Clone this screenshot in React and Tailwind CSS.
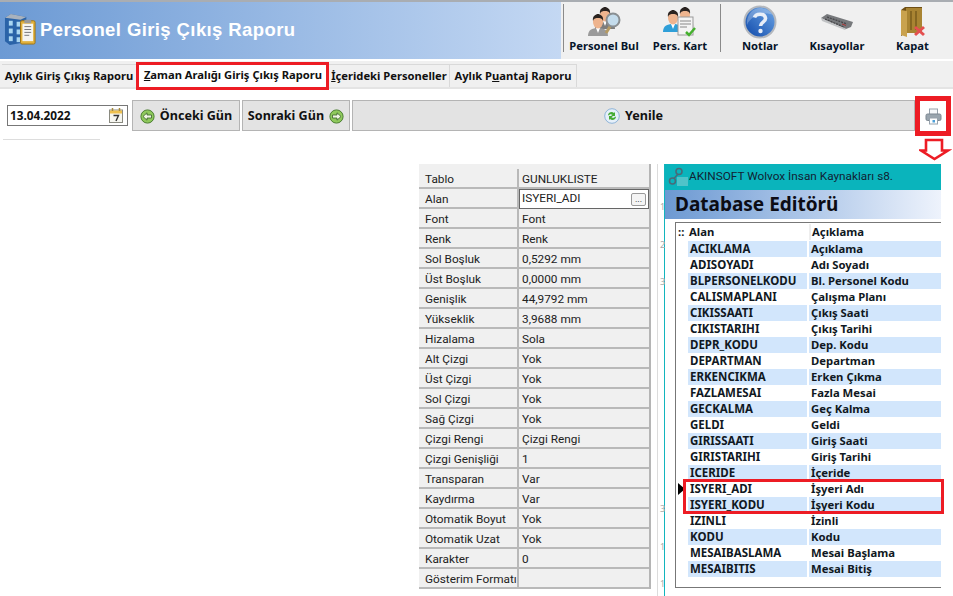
import React from "react";

const props = [
  ["Tablo", "GUNLUKLISTE"], ["Alan", "ISYERI_ADI"], ["Font", "Font"], ["Renk", "Renk"],
  ["Sol Boşluk", "0,5292 mm"], ["Üst Boşluk", "0,0000 mm"], ["Genişlik", "44,9792 mm"], ["Yükseklik", "3,9688 mm"],
  ["Hizalama", "Sola"], ["Alt Çizgi", "Yok"], ["Üst Çizgi", "Yok"], ["Sol Çizgi", "Yok"], ["Sağ Çizgi", "Yok"],
  ["Çizgi Rengi", "Çizgi Rengi"], ["Çizgi Genişliği", "1"], ["Transparan", "Var"], ["Kaydırma", "Var"],
  ["Otomatik Boyut", "Yok"], ["Otomatik Uzat", "Yok"], ["Karakter", "0"], ["Gösterim Formatı", ""],
];
const fields = [
  ["ACIKLAMA", "Açıklama"], ["ADISOYADI", "Adı Soyadı"], ["BLPERSONELKODU", "Bl. Personel Kodu"],
  ["CALISMAPLANI", "Çalışma Planı"], ["CIKISSAATI", "Çıkış Saati"], ["CIKISTARIHI", "Çıkış Tarihi"],
  ["DEPR_KODU", "Dep. Kodu"], ["DEPARTMAN", "Departman"], ["ERKENCIKMA", "Erken Çıkma"], ["FAZLAMESAI", "Fazla Mesai"],
  ["GECKALMA", "Geç Kalma"], ["GELDI", "Geldi"], ["GIRISSAATI", "Giriş Saati"], ["GIRISTARIHI", "Giriş Tarihi"],
  ["ICERIDE", "İçeride"], ["ISYERI_ADI", "İşyeri Adı"], ["ISYERI_KODU", "İşyeri Kodu"], ["IZINLI", "İzinli"],
  ["KODU", "Kodu"], ["MESAIBASLAMA", "Mesai Başlama"], ["MESAIBITIS", "Mesai Bitiş"],
];

const Person = ({ x = 0, y = 0, suit = "#8b8b8b" }) => (
  <g transform={`translate(${x} ${y})`}>
    <path d="M0 22c0-6 4-8 10-8s10 2 10 8z" fill={suit} />
    <path d="M8 14l2 5 2-5z" fill="#fff" />
    <ellipse cx="10" cy="8" rx="5" ry="6.5" fill="#eeb48e" />
    <path d="M5 7c-1-5 3-7 5-7s6 2 5 7c-1-3-3-3-5-3s-4 0-5 3z" fill="#2a2320" />
  </g>
);

const IconFind = () => (
  <svg width="34" height="32" viewBox="0 0 34 32">
    <Person x={8} y={1} suit="#7d7d7d" />
    <Person x={1} y={8} suit="#9a9a9a" />
    <path d="M19 27l5-8" stroke="#b59a63" strokeWidth="3" />
    <circle cx="26" cy="14" r="6.5" fill="#c4dcec" stroke="#8a8f92" strokeWidth="2" />
  </svg>
);
const IconCard = () => (
  <svg width="34" height="32" viewBox="0 0 34 32">
    <Person x={12} y={1} suit="#e4e4e4" />
    <Person x={0} y={4} suit="#2f9fd8" />
    <rect x="15" y="11" width="15" height="18" fill="#f4f4f4" stroke="#9a9a9a" />
    <path d="M17 15h11M17 18h11M17 21h7" stroke="#888" />
    <path d="M23 26l3 3 6-7" fill="none" stroke="#45b02e" strokeWidth="2.5" />
  </svg>
);
const IconHelp = () => (
  <svg width="34" height="34" viewBox="0 0 34 34">
    <defs>
      <linearGradient id="hg" x1="0" y1="1" x2="1" y2="0">
        <stop offset="0" stopColor="#0d47a8" /><stop offset="1" stopColor="#6fa8e8" />
      </linearGradient>
    </defs>
    <circle cx="17" cy="17" r="15.5" fill="url(#hg)" stroke="#b4b8be" strokeWidth="2" />
    <path d="M4 20C8 10 22 6 30 10 26 4 20 3 17 3 9 3 3 11 4 20z" fill="#fff" opacity=".25" />
    <path d="M11.500 12.500c1-4 10-5 11 .5 .6 4-5 4-5 8" fill="none" stroke="#e8eef8" strokeWidth="3.6" />
    <circle cx="17.500" cy="26" r="2.200" fill="#e8eef8" />
  </svg>
);
const IconKeyboard = () => (
  <svg width="34" height="18" viewBox="0 0 34 18">
    <path d="M1 5L7 1 33 9 31 14 26 16z" fill="#77797c" />
    <path d="M1 5L26 16 25 17 2 8z" fill="#c0c2c4" />
    <path d="M7 4l20 7M5 6l19 8" stroke="#47474a" strokeWidth="1.3" strokeDasharray="2 1" />
    <path d="M22 11l4 1.500" stroke="#a33" />
  </svg>
);
const IconDoor = () => (
  <svg width="26" height="30" viewBox="0 0 26 30">
    <path d="M1 3L5 0H22V26H6L1 29z" fill="#6f4f14" />
    <path d="M6 1H22V26H6z" fill="#a98432" />
    <path d="M1 3L7 4V30L1 28z" fill="#c9a24e" />
    <path d="M11 4v19M16 4v19" stroke="#7a5c1c" strokeWidth="1.500" />
    <path d="M15 20l9 8M24 20l-9 8" stroke="#e45050" strokeWidth="3" />
  </svg>
);
const IconPrinter = () => (
  <svg width="17" height="17" viewBox="0 0 17 17">
    <rect x="4.500" y="1" width="8" height="6" fill="#f6f8fa" stroke="#98a2ac" />
    <rect x="1" y="6" width="15" height="6.500" rx="1.500" fill="#9aa5ae" stroke="#7c8791" />
    <rect x="4.500" y="10" width="8" height="6" fill="#fff" stroke="#98a2ac" />
    <rect x="7.500" y="12" width="2.500" height="2.500" fill="#4d9fd8" />
  </svg>
);
const Nav = ({ dir }) => (
  <svg width="15" height="15" viewBox="0 0 15 15">
    <circle cx="7.500" cy="7.500" r="6.600" fill="#8fc95c" stroke="#4c7f33" />
    <path
      d={dir === "left" ? "M3 7.500L7 3.800V6h4.500v3H7v2.200z" : "M12 7.500L8 3.800V6H3.500v3H8v2.200z"}
      fill="#f0f6e4" stroke="#39602a" strokeWidth=".8"
    />
  </svg>
);
const Refresh = () => (
  <svg width="16" height="16" viewBox="0 0 16 16">
    <circle cx="8" cy="8" r="7.300" fill="#e6f0fa" stroke="#8fb4d8" />
    <path d="M4 7c.5-3 4-4 6-2l1-1v4H7l1.500-1.200C7 6 5.500 6 5 7.600z" fill="#45ab34" />
    <path d="M12 9c-.5 3-4 4-6 2l-1 1V8h4l-1.500 1.200C9 10 10.500 10 11 8.400z" fill="#45ab34" />
  </svg>
);
const Calendar = () => (
  <svg width="14" height="15" viewBox="0 0 14 15">
    <rect x=".5" y="2" width="13" height="12.500" fill="#f6f6f0" stroke="#8a8a80" />
    <rect x="1" y="2.500" width="12" height="3" fill="#eec04e" />
    <path d="M3.500 0v3M10.500 0v3" stroke="#a88a3a" strokeWidth="1.500" />
    <path d="M4.500 7.500h5L7 13" fill="none" stroke="#333" strokeWidth="1.400" />
  </svg>
);
const AppIcon = () => (
  <svg width="33" height="33" viewBox="0 0 34 34">
    <path d="M1 5l6-4 16 3v26L6 33 1 29z" fill="#2a63a8" />
    <path d="M1 5l6-4 16 3-6 3z" fill="#a8b2be" />
    <g fill="#a9d6f2">
      <rect x="5" y="8" width="4" height="5" /><rect x="13" y="9" width="4" height="5" />
      <rect x="5" y="16" width="4" height="5" /><rect x="13" y="17" width="4" height="5" />
      <rect x="5" y="24" width="4" height="5" /><rect x="13" y="25" width="4" height="5" />
    </g>
    <rect x="17" y="8" width="15" height="24" rx="1.500" fill="#e2b13c" stroke="#9c7418" />
    <rect x="19" y="11" width="11" height="18" fill="#f5f5f2" />
    <rect x="21" y="7" width="7" height="3.500" fill="#9a9a9a" />
    <path d="M21 14h7M21 17h7M21 20h7M21 23h5" stroke="#77777a" />
  </svg>
);
const WolvoxIcon = () => (
  <svg width="20" height="20" viewBox="0 0 20 20">
    <circle cx="11" cy="4.500" r="3" fill="none" stroke="#4a6a78" strokeWidth="1.600" />
    <circle cx="4.500" cy="14" r="3" fill="none" stroke="#4a6a78" strokeWidth="1.600" />
    <path d="M10 7l-4 4.500" stroke="#4a6a78" strokeWidth="1.500" />
    <rect x="9" y="10" width="11" height="9" fill="#7fcdd2" opacity=".6" />
  </svg>
);

const ToolBtn = ({ w, label, children }) => (
  <button className={`${w} h-full flex flex-col items-center justify-between pt-[3px] pb-[6px] text-[11.2px] font-bold text-[#06152a]`}>
    <span className="h-[34px] flex items-center justify-center">{children}</span>
    <span className="leading-[14px]">{label}</span>
  </button>
);
const Tab = ({ w, active, children }) => (
  <div className={`${w} h-full flex items-center justify-center whitespace-nowrap text-[11.2px] font-bold text-[#111] ${active ? "bg-white pb-[1px]" : "border-r border-[#d9d9d9] border-t bg-[#f0f0f0] pt-[1px]"}`}>
    {children}
  </div>
);
const NavBtn = ({ w, children }) => (
  <button className={`${w} h-full flex items-center justify-center gap-[5px] pt-px bg-[#e3e3e3] border border-[#b4b4b4] text-[12.6px] font-bold text-[#111]`}>
    {children}
  </button>
);

export default function App() {
  return (
    <div className="relative w-[953px] h-[596px] overflow-hidden bg-white flex flex-col" style={{ fontFamily: '"Noto Sans", "Liberation Sans", sans-serif' }}>
      <header className="h-[59px] border-t-2 border-[#a9adb2] flex shrink-0">
        <div className="w-[561px] flex items-center pl-[4px] pb-[2px] bg-gradient-to-r from-[#6c9ad4] to-[#c4d8f3]">
          <AppIcon />
          <h1 className="ml-[3px] text-[18.5px] font-bold text-white tracking-[0.4px]" style={{ fontFamily: '"Liberation Sans", sans-serif' }}>
            Personel Giriş Çıkış Raporu
          </h1>
        </div>
        <div className="flex-1 flex bg-[#f0f0f0] pl-[2px]">
          <div className="w-px h-[48px] mt-[2px] bg-[#8a8a8a]" />
          <ToolBtn w="w-[80px]" label="Personel Bul"><IconFind /></ToolBtn>
          <ToolBtn w="w-[72px]" label="Pers. Kart"><IconCard /></ToolBtn>
          <div className="w-px h-[48px] mt-[2px] ml-[4px] bg-[#8a8a8a]" />
          <ToolBtn w="w-[78px]" label="Notlar"><IconHelp /></ToolBtn>
          <ToolBtn w="w-[76px]" label="Kısayollar"><IconKeyboard /></ToolBtn>
          <ToolBtn w="w-[75px]" label="Kapat"><IconDoor /></ToolBtn>
        </div>
      </header>

      <nav className="mt-[2px] h-[28px] shrink-0 bg-[#f0f0f0] pt-[3px] border-b-2 border-[#e4e4e4] flex pl-[2px]">
        <Tab w="w-[135px]"><span>A<span className="underline">y</span>lık Giriş Çıkış Raporu</span></Tab>
        <Tab w="w-[192px]" active><span><span className="underline">Z</span>aman Aralığı Giriş Çıkış Raporu</span></Tab>
        <Tab w="w-[121px]"><span><span className="underline">İ</span>çerideki Personeller</span></Tab>
        <Tab w="w-[127px]"><span>Aylık P<span className="underline">u</span>antaj Raporu</span></Tab>
      </nav>

      <div className="mt-[11px] h-[31px] shrink-0 flex items-center pl-[7px]">
        <div className="w-[121px] h-[21px] border border-[#777] bg-white flex items-center justify-between pl-[2px] pr-[4px] text-[11.8px] font-bold text-[#111]">
          13.04.2022 <Calendar />
        </div>
        <div className="ml-[4px] h-full flex gap-[2px]">
          <NavBtn w="w-[108px]"><Nav dir="left" />Önceki Gün</NavBtn>
          <NavBtn w="w-[108px]">Sonraki Gün<Nav dir="right" /></NavBtn>
          <NavBtn w="w-[563px]"><Refresh />Yenile</NavBtn>
        </div>
        <div className="ml-[10px] mt-[2px]"><IconPrinter /></div>
      </div>

      <div className="ml-[3px] mt-[8px] w-[97px] h-px bg-[#dddddd] shrink-0" />

      <main className="mt-[24px] ml-[419px] flex flex-1 min-h-0">
        <section className="w-[232px] self-start bg-[#f0f0f0] pt-[5px] border-r-2 border-[#b5b5b5] text-[11.8px] text-[#222]" style={{ fontFamily: 'Roboto, sans-serif' }}>
          {props.map(([k, v]) => (
            <div key={k} className="h-[20px] flex border-b-2 border-[#b9b9b9]">
              <div className="w-[100px] pl-[6px] border-r-2 border-[#b9b9b9] leading-[20px] whitespace-nowrap">{k}</div>
              {k === "Alan" ? (
                <div className="flex-1 h-[20px] bg-white border border-[#666] pl-[2px] pr-[2px] flex items-center justify-between">
                  <span>{v}</span>
                  <span className="w-[15px] h-[13px] border border-[#999] rounded-[2px] bg-[#f4f4f4] text-[9px] leading-[10px] text-center">...</span>
                </div>
              ) : (
                <div className="flex-1 pl-[3px] leading-[20px] whitespace-nowrap">{v}</div>
              )}
            </div>
          ))}
        </section>

        <div className="w-[13px] relative text-[9px] text-[#aaa]">
          <div className="absolute left-[6px] top-0 bottom-0 w-px bg-[#dcdcdc]" />
          <span className="absolute left-[9px] top-[36px]">1</span>
          <span className="absolute left-[9px] top-[74px]">2</span>
          <span className="absolute left-[9px] top-[111px]">3</span>
          <span className="absolute left-[9px] top-[338px]">3</span>
          <span className="absolute left-[9px] top-[376px]">1</span>
          <span className="absolute left-[9px] top-[413px]">1</span>
        </div>

        <section className="w-[277px] border-l border-[#12b5bd] flex flex-col">
          <div className="h-[26px] bg-[#0ab4bc] flex items-center pl-[3px] gap-[1px] text-[11.8px] text-[#123] whitespace-nowrap" style={{ fontFamily: 'Roboto, sans-serif' }}>
            <WolvoxIcon />AKINSOFT Wolvox İnsan Kaynakları s8.
          </div>
          <div className="h-[29px] pl-[10px] flex items-center bg-gradient-to-r from-[#6c99d2] to-[#eef3fc] text-[19px] font-bold text-[#0c0c14]">
            Database Editörü
          </div>
          <div className="relative mt-[3px] ml-[10px] h-[366px] border-l border-t border-b border-[#777] pt-[1px] bg-white text-[11.3px] font-bold text-[#101822]">
            <div className="h-[17px] flex items-center pb-[1px]">
              <span className="w-[12px] pl-[2px] leading-[10px]">::</span>
              <span className="w-[121px] pl-[1px]">Alan</span>
              <span className="pl-[1px] border-l-2 border-[#eee]">Açıklama</span>
            </div>
            {fields.map(([a, b], i) => (
              <div key={a} className="h-[16px] flex items-center pl-[12px]">
                <div className={`flex-1 h-full flex items-center ${i % 2 === 0 ? "bg-[#d2e6fc]" : "bg-white"}`}>
                  <span className="w-[121px] pl-[2px] border-r-2 border-white whitespace-nowrap text-[11.5px]">{a}</span>
                  <span className="pl-[2px] whitespace-nowrap">{b}</span>
                </div>
              </div>
            ))}
            <div className="absolute left-[2px] top-[260px] w-0 h-0 border-y-[6px] border-y-transparent border-l-[7px] border-l-black" />
          </div>
        </section>
      </main>

      <div className="absolute left-[136px] top-[62px] w-[193px] h-[28px] border-[3px] border-[#ed1c24]" />
      <div className="absolute left-[915px] top-[96px] w-[36px] h-[40px] border-[5px] border-[#ed1c24]" />
      <svg className="absolute left-[919px] top-[138px]" width="33" height="23" viewBox="0 0 33 23">
        <path d="M7 2h16v10.500h6L15.500 21 2 12.500h5z" fill="#fff" stroke="#ed1c24" strokeWidth="2.6" />
      </svg>
      <div className="absolute left-[683px] top-[479px] w-[261px] h-[35px] border-[3px] border-[#ed1c24]" />
    </div>
  );
}
